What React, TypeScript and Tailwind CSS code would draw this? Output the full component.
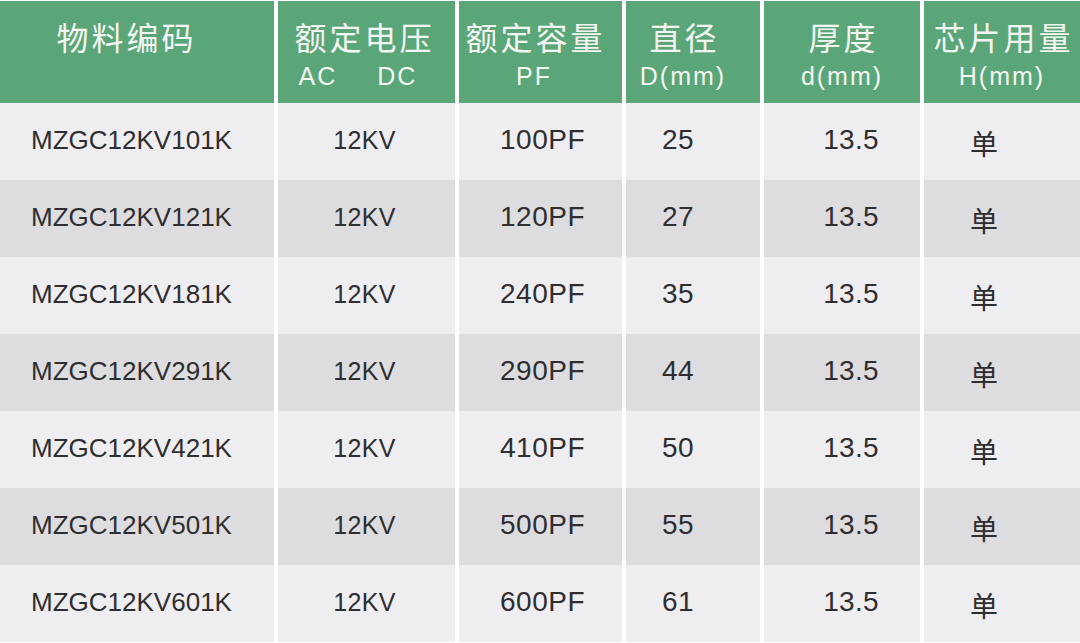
const rows = [
  ["MZGC12KV101K", "12KV", "100PF", "25", "13.5", "单"],
  ["MZGC12KV121K", "12KV", "120PF", "27", "13.5", "单"],
  ["MZGC12KV181K", "12KV", "240PF", "35", "13.5", "单"],
  ["MZGC12KV291K", "12KV", "290PF", "44", "13.5", "单"],
  ["MZGC12KV421K", "12KV", "410PF", "50", "13.5", "单"],
  ["MZGC12KV501K", "12KV", "500PF", "55", "13.5", "单"],
  ["MZGC12KV601K", "12KV", "600PF", "61", "13.5", "单"],
]

// per-column nudges so text sits where the source table has it
const bodyPad = ["pr-[11px]", "pr-[4px]", "pl-[4px]", "pr-[30px]", "pl-[18px]", "pr-[36px]"]
// the source table doesn't use one size for every column
const bodySize = [
  "text-[26px]",
  "text-[25px] tracking-[0.3px]",
  "text-[28px] tracking-[0.5px]",
  "text-[28px] tracking-[0.5px]",
  "text-[28px] tracking-[0.3px]",
]

const cjk = "font-['Noto_Sans_CJK_SC','Noto_Sans',sans-serif]"
const latin = "font-['Liberation_Sans',Arial,sans-serif]"

function HeadCell({ title, sub, pad }: { title: string; sub?: React.ReactNode; pad: string }) {
  return (
    <div className={`bg-[#5ba678] h-[102px] flex flex-col items-center pt-[13px] text-[#f3f5f2] ${pad}`}>
      <div className={`${cjk} text-[32px] leading-[44px] tracking-[3px] pl-[3px]`}>{title}</div>
      {sub && <div className={`${latin} text-[25px] leading-[30px] tracking-[2px] mt-[3px]`}>{sub}</div>}
    </div>
  )
}

export default function App() {
  return (
    <div className="w-[1080px] h-[643px] bg-white pt-[1px] overflow-hidden">
      <div className="grid grid-cols-[274px_177px_163px_134px_156px_156px] gap-x-[4px]">
        <HeadCell title="物料编码" pad="pr-[24px]" />
        <HeadCell
          title="额定电压"
          pad="pr-[7px]"
          sub={
            <div className="flex gap-[40px] pr-[10px]">
              <span>AC</span>
              <span>DC</span>
            </div>
          }
        />
        <HeadCell title="额定容量" pad="pr-[13px]" sub="PF" />
        <HeadCell title="直径" pad="pr-[20px]" sub="D(mm)" />
        <HeadCell title="厚度" pad="" sub="d(mm)" />
        <HeadCell title="芯片用量" pad="" sub="H(mm)" />

        {rows.map((row, i) =>
          row.map((val, j) => (
            <div
              key={`${i}-${j}`}
              className={`h-[77px] flex items-center justify-center text-[#2e2e30] ${bodyPad[j]} ${
                i % 2 === 0 ? "bg-[#eeedf0]" : "bg-[#dddddf]"
              }`}
            >
              {j === 5 ? (
                <span className={`${cjk} text-[28px] leading-none mt-[2px]`}>{val}</span>
              ) : (
                <span className={`${latin} ${bodySize[j]} leading-none -mt-[3px]`}>{val}</span>
              )}
            </div>
          ))
        )}
      </div>
    </div>
  )
}
